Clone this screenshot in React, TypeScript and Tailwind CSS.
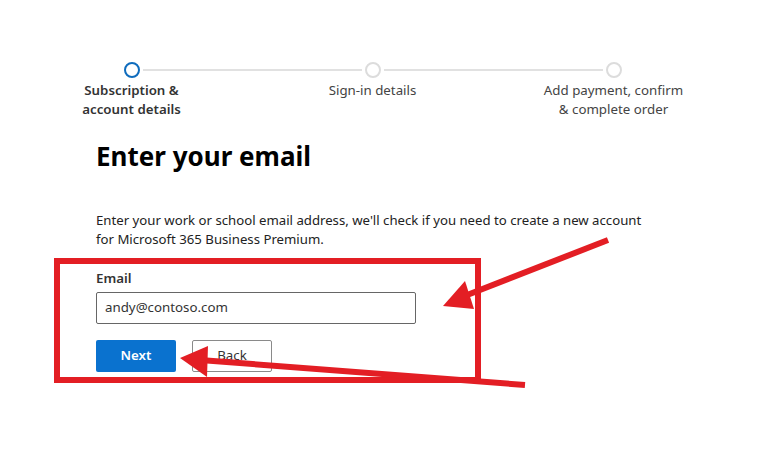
import React from "react";

const steps = [
  { label: ["Subscription &", "account details"], active: true },
  { label: ["Sign-in details"], active: false },
  { label: ["Add payment, confirm", "& complete order"], active: false },
];

export default function App() {
  return (
    <div
      className="relative w-[761px] h-[454px] overflow-hidden bg-white text-[#1b1b1b]"
      style={{ fontFamily: '"Noto Sans", "Open Sans", sans-serif' }}
    >
      {/* Stepper */}
      <div className="grid grid-cols-3 ml-[11px] w-[723px] pt-[62px]">
        {steps.map((step, i) => (
          <div key={i} className="flex flex-col items-center">
            <div className="flex items-center w-full">
              <div className={`flex-1 h-[2px] ${i === 0 ? "" : "bg-[#e1e1e1]"}`} />
              <div
                className={`w-[16px] h-[16px] rounded-full border-2 mx-[3px] ${
                  step.active ? "border-[#0f6cbd]" : "border-[#dcdcdc]"
                }`}
              />
              <div className={`flex-1 h-[2px] ${i === 2 ? "" : "bg-[#e1e1e1]"}`} />
            </div>
            <div
              className={`mt-[3px] text-center text-[13.3px] leading-[19px] ${
                step.active ? "font-semibold text-[#333]" : "text-[#444]"
              }`}
            >
              {step.label.map((l) => (
                <div key={l}>{l}</div>
              ))}
            </div>
          </div>
        ))}
      </div>

      {/* Main form */}
      <div className="pl-[96px] pt-[20px]">
        <h1 className="text-[26px] leading-[34px] font-bold text-black">Enter your email</h1>
        <p className="mt-[38px] text-[13.2px] leading-[19px] text-[#222] w-[560px]">
          Enter your work or school email address, we'll check if you need to create a new account for
          Microsoft 365 Business Premium.
        </p>
        <label className="block mt-[20px] text-[13.3px] font-semibold text-[#333]">Email</label>
        <div className="mt-[3px] w-[320px] h-[32px] border border-[#666] rounded-[2px] flex items-center px-[8px] text-[13.3px] text-[#333]">
          andy@contoso.com
        </div>
        <div className="flex gap-[16px] mt-[16px]">
          <button className="w-[80px] h-[32px] bg-[#0a72cf] rounded-[2px] text-white text-[13.3px] font-semibold">
            Next
          </button>
          <button className="w-[80px] h-[32px] border border-[#8a8a8a] rounded-[2px] text-[#333] text-[13.3px]">
            Back
          </button>
        </div>
      </div>

      {/* Annotation box */}
      <div className="absolute left-[54px] top-[258px] w-[427px] h-[125px] border-[6px] border-[#e31e24]" />

      {/* Annotation arrows */}
      <svg className="absolute inset-0" width="761" height="454" viewBox="0 0 761 454">
        <line x1="608" y1="240" x2="462" y2="297" stroke="#e31e24" strokeWidth="6" />
        <polygon points="443,306 465,281 474,309" fill="#e31e24" />
        <line x1="525" y1="385" x2="200" y2="360" stroke="#e31e24" strokeWidth="6" />
        <polygon points="180,358 208,346 207,377" fill="#e31e24" />
      </svg>
    </div>
  );
}
